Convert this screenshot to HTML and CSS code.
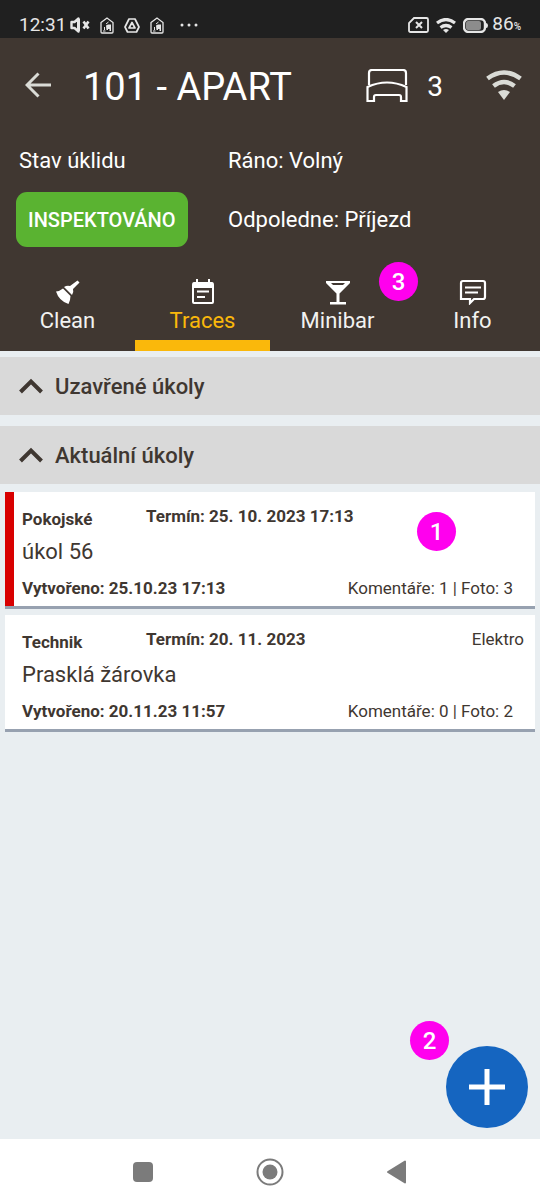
FILE: index.html
```html
<!DOCTYPE html>
<html lang="cs">
<head>
<meta charset="utf-8">
<meta name="viewport" content="width=device-width, initial-scale=1">
<title>101 - APART</title>
<link rel="stylesheet" href="styles.css">
</head>
<body>
<div class="status-bar">
  <div class="status-left">
    <span class="clock">12:31</span>
    <svg width="20" height="16" viewBox="0 0 20 16" fill="none" stroke="#e6e6e6"><path d="M1.500 5h3l4-3.500v13l-4-3.500h-3z" stroke-width="2.400" stroke-linejoin="round"/><path d="M7 2h3v12H7z" fill="#e6e6e6" stroke="none"/><path d="M13.500 4.500l5 7M18.500 4.500l-5 7" stroke-width="2.600"/></svg>
    <svg class="notice" width="14" height="17" viewBox="0 0 14 17" fill="none" stroke="#e6e6e6"><path d="M1 5.500L7 1l6 4.500V15q0 1-1 1H2q-1 0-1-1z" stroke-width="1.300"/><path d="M3 14h2.500M4.500 13v-3M6 7l2.500-2" stroke-width="1"/><path d="M6 8.500l2-1h3V14H9.500v-2H8v1H6.500z" fill="#e6e6e6" stroke="none"/></svg>
    <svg class="notice" width="16" height="15" viewBox="0 0 16 15" fill="none" stroke="#e6e6e6" stroke-width="1.700" stroke-linejoin="round"><path d="M5 1h6l4 8-2.500 5h-9L1 9z"/><path d="M8 4.500l3 5.500H5z"/></svg>
    <svg class="notice" width="14" height="17" viewBox="0 0 14 17" fill="none" stroke="#e6e6e6"><path d="M1 5.500L7 1l6 4.500V15q0 1-1 1H2q-1 0-1-1z" stroke-width="1.300"/><path d="M3 14h2.500M4.500 13v-3M6 7l2.500-2" stroke-width="1"/><path d="M6 8.500l2-1h3V14H9.500v-2H8v1H6.500z" fill="#e6e6e6" stroke="none"/></svg>
    <svg class="more" width="18" height="4" viewBox="0 0 18 4" fill="#e6e6e6"><circle cx="2" cy="2" r="1.500"/><circle cx="9" cy="2" r="1.500"/><circle cx="16" cy="2" r="1.500"/></svg>
  </div>
  <div class="status-right">
    <svg width="21" height="16" viewBox="0 0 21 16" fill="none" stroke="#e6e6e6" stroke-width="1.800"><path d="M6 1h12.500q1.500 0 1.500 1.500v11q0 1.500-1.500 1.500h-16Q1 15 1 13.500V6z"/><path d="M8 5l6 6M14 5l-6 6" stroke-width="2"/></svg>
    <svg width="20" height="15" viewBox="0 0 20 15" fill="none" stroke="#e6e6e6" stroke-width="3.200"><path d="M1 5q9-7 18 0M4.500 9.500q5.500-4 11 0"/><path d="M7 12q3-2 6 0l-3 3z" fill="#e6e6e6" stroke="none"/></svg>
    <svg width="25" height="15" viewBox="0 0 25 15"><rect x="1" y="1" width="21" height="13" rx="4.500" fill="none" stroke="#e6e6e6" stroke-width="2.400"/><rect x="3" y="3" width="15" height="9" rx="2" fill="#8c8c8c"/><path d="M23 5q2 0 2 2.500T23 10z" fill="#e6e6e6"/></svg>
    <span class="battery">86<small>%</small></span>
  </div>
</div>

<header class="header">
  <div class="title-bar">
    <button class="icon-button" aria-label="Zpět"><svg width="26" height="26" viewBox="0 0 26 26" fill="none" stroke="#dadbd6" stroke-width="3"><path d="M26 13H2.500M13.500 1.500L2 13l11.500 11.500"/></svg></button>
    <h1 class="title">101 - APART</h1>
    <svg class="bed" width="42" height="33" viewBox="0 0 42 33" fill="none" stroke="#fff" stroke-width="2.200"><path d="M3 16V4q0-3 3-3h31q3 0 3 3v12M1.500 32V18q19.500-9 39 0v14h-5.500v-4q0-2-2-2H10q-2 0-2 2v4z"/></svg>
    <span class="guests">3</span>
    <svg class="wifi" width="36" height="30" viewBox="0 0 36 30" fill="none" stroke="#dadbd6"><path d="M1.500 8.500q16.500-12 33 0" stroke-width="4.500"/><path d="M7.500 16q10.500-8 21 0" stroke-width="4.500"/><path d="M12 22q6-4 12 0l-6 8z" fill="#dadbd6" stroke="none"/></svg>
  </div>
  <div class="summary">
    <span class="cleaning-label">Stav úklidu</span>
    <span>Ráno: Volný</span>
    <button class="cleaning-state">INSPEKTOVÁNO</button>
    <span>Odpoledne: Příjezd</span>
  </div>
  <nav class="tabs">
    <a class="tab" href="#clean">
      <svg width="26" height="26" viewBox="0 0 26 26" fill="#fff"><path d="M22.500 1.500L24.500 3.500 18 10q1 3-1 6L9 8q3-2 6-1z"/><path d="M8 9.500L15.500 17Q15.500 21 13.500 25 4 22 1 12.500q4-.5 7-3z"/></svg>
      Clean
    </a>
    <a class="tab tab-active" href="#traces">
      <svg width="26" height="26" viewBox="0 0 26 26"><path fill="#fff" fill-rule="evenodd" d="M6 0h2v3h10V0h2v3h2q2 0 2 3v17q0 2-2 2H4q-2 0-2-2V6q0-3 2-3h2zM4 9v14h18V9zM7 11.500h12v2H7zM7 17h8v2H7z"/></svg>
      Traces
    </a>
    <a class="tab" href="#minibar">
      <svg width="26" height="26" viewBox="0 0 26 26"><path fill="#fff" fill-rule="evenodd" d="M1 2h24v2l-10.500 10.500V23H21v2.500H5V23h6.500v-8.500L1 4zM6 4l2 2h10l2-2z"/></svg>
      Minibar
      <span class="badge badge-tab">3</span>
    </a>
    <a class="tab" href="#info">
      <svg width="28" height="26" viewBox="0 0 28 26" fill="none" stroke="#fff" stroke-width="2"><path d="M4 2h20q2 0 2 2v14q0 2-2 2H15l-4 4v-4H2V4q0-2 2-2z" stroke-width="2.200"/><path d="M6 8.500h16M6 13.500h13"/></svg>
      Info
    </a>
  </nav>
</header>

<main class="content">
  <button class="section"><svg width="24" height="16" viewBox="0 0 24 16" fill="none" stroke="#3f3731" stroke-width="4"><path d="M1.500 14L12 3.500 22.500 14"/></svg>Uzavřené úkoly</button>
  <button class="section"><svg width="24" height="16" viewBox="0 0 24 16" fill="none" stroke="#3f3731" stroke-width="4"><path d="M1.500 14L12 3.500 22.500 14"/></svg>Aktuální úkoly</button>
  <div class="tasks">
    <article class="task task-urgent">
      <div class="task-head"><span class="department">Pokojské</span><span class="due">Termín: 25. 10. 2023 17:13</span></div>
      <h2 class="task-title">úkol 56</h2>
      <div class="task-foot"><span class="created">Vytvořeno: 25.10.23 17:13</span><span>Komentáře: 1 | Foto: 3</span></div>
      <span class="badge badge-task">1</span>
    </article>
    <article class="task">
      <div class="task-head"><span class="department">Technik</span><span class="due">Termín: 20. 11. 2023</span><span class="category">Elektro</span></div>
      <h2 class="task-title">Prasklá žárovka</h2>
      <div class="task-foot"><span class="created">Vytvořeno: 20.11.23 11:57</span><span>Komentáře: 0 | Foto: 2</span></div>
    </article>
  </div>
  <span class="badge badge-add">2</span>
  <button class="add" aria-label="Přidat úkol"><svg width="36" height="36" viewBox="0 0 36 36" stroke="#fff" stroke-width="5"><path d="M18 0v36M0 18h36"/></svg></button>
</main>

<nav class="system-nav">
  <button class="icon-button" aria-label="Poslední aplikace"><svg width="28" height="28" viewBox="0 0 28 28"><rect x="4" y="4" width="20" height="20" rx="4" fill="#7b7b7b"/></svg></button>
  <button class="icon-button" aria-label="Domů"><svg width="28" height="28" viewBox="0 0 28 28"><circle cx="14" cy="14" r="12.500" fill="none" stroke="#7b7b7b" stroke-width="2"/><circle cx="14" cy="14" r="7.500" fill="#7b7b7b"/></svg></button>
  <button class="icon-button" aria-label="Zpět"><svg width="28" height="28" viewBox="0 0 28 28"><path d="M5 14L22 3.500v21z" fill="#7b7b7b" stroke="#7b7b7b" stroke-width="2" stroke-linejoin="round"/></svg></button>
</nav>
</body>
</html>
```
FILE: styles.css
```css
* {
  box-sizing: border-box;
}

body {
  margin: 0;
  min-height: 100vh;
  display: flex;
  flex-direction: column;
  background: #e9eef1;
  color: #3f3731;
  font-family: Roboto, "Noto Sans", sans-serif;
}

svg {
  display: block;
  flex: none;
}

button {
  border: 0;
  font-family: inherit;
  color: inherit;
}

.icon-button {
  padding: 0;
  background: none;
}

.status-bar {
  display: flex;
  justify-content: space-between;
  height: 38px;
  padding: 12px 19px 0;
  background: #202020;
  color: #e6e6e6;
  font-size: 19px;
  line-height: 26px;
}

.status-left,
.status-right {
  display: flex;
  align-items: center;
}

.status-left {
  gap: 4px;
}

.status-right {
  gap: 7px;
}

.notice {
  margin-left: 6px;
}

.notice:first-of-type {
  margin-left: 5px;
}

.more {
  margin-left: 12px;
}

.battery {
  margin-left: -3px;
}

.battery small {
  font-size: 10px;
  font-weight: 500;
}

.header {
  background: #403731;
  color: #fff;
  font-size: 22px;
}

.title-bar {
  display: flex;
  align-items: center;
  height: 94px;
  padding: 0 18px 0 25px;
}

.title {
  margin: 0 0 0 32px;
  padding-top: 4px;
  flex: 1;
  font-size: 38px;
  font-weight: 400;
  line-height: 48px;
}

.guests {
  margin-left: 19px;
  padding-top: 2px;
  font-size: 28px;
}

.wifi {
  margin-left: 43px;
}

.summary {
  display: grid;
  grid-template-columns: 212px 1fr;
  row-gap: 15px;
  align-items: center;
  padding: 12px 16px 0;
  line-height: 33px;
}

.cleaning-label {
  padding-left: 3px;
}

.cleaning-state {
  justify-self: start;
  height: 55px;
  padding: 0 12px;
  border-radius: 11px;
  background: #5ab331;
  color: #fff;
  font-size: 20px;
  font-weight: 500;
}

.tabs {
  display: grid;
  grid-template-columns: repeat(4, 1fr);
  margin-top: 21px;
}

.tab {
  position: relative;
  display: flex;
  flex-direction: column;
  align-items: center;
  height: 83px;
  padding-top: 11px;
  border-bottom: 11px solid transparent;
  color: #f2f2f0;
  line-height: 32px;
  text-decoration: none;
}

.tab-active {
  border-color: #fab80b;
  color: #fab80b;
}

.content {
  position: relative;
  flex: 1;
  padding-top: 6px;
}

.section {
  display: flex;
  align-items: center;
  gap: 12px;
  width: 100%;
  height: 58px;
  margin-bottom: 11px;
  padding: 0 19px;
  background: #d9d9d9;
  font-size: 22px;
  font-weight: 500;
}

.tasks {
  display: flex;
  flex-direction: column;
  gap: 6px;
  margin-top: -3px;
  padding: 0 5px;
}

.task {
  position: relative;
  padding: 14px 11px 11px 17px;
  box-shadow: inset 0 -3px #97a1b0;
  background: #fff;
  font-size: 17px;
  line-height: 20px;
}

.task-urgent {
  box-shadow: inset 0 -3px #97a1b0, inset 9px 0 #d80000;
}

.task-head {
  display: flex;
  align-items: flex-start;
}

.department {
  width: 124px;
  line-height: 26px;
}

.department,
.due,
.created {
  font-weight: 700;
}

.category {
  margin-left: auto;
}

.task-title {
  margin: 4px 0 10px;
  font-size: 22px;
  font-weight: 400;
  line-height: 32px;
}

.task-foot {
  display: flex;
  justify-content: space-between;
  padding-right: 11px;
}

.badge {
  position: absolute;
  width: 39px;
  height: 39px;
  border-radius: 50%;
  background: #ff00ee;
  color: #fff;
  font-size: 24px;
  font-weight: 500;
  line-height: 40px;
  text-align: center;
}

.badge-tab {
  top: -6px;
  right: -13px;
}

.badge-task {
  top: 20px;
  right: 79px;
}

.badge-add {
  right: 91px;
  bottom: 79px;
}

.add {
  position: absolute;
  right: 12px;
  bottom: 11px;
  width: 82px;
  height: 82px;
  display: grid;
  place-items: center;
  padding: 0;
  border-radius: 50%;
  background: #1565c0;
}

.system-nav {
  display: flex;
  align-items: center;
  justify-content: center;
  gap: 99px;
  height: 65px;
  background: #fff;
}
```
